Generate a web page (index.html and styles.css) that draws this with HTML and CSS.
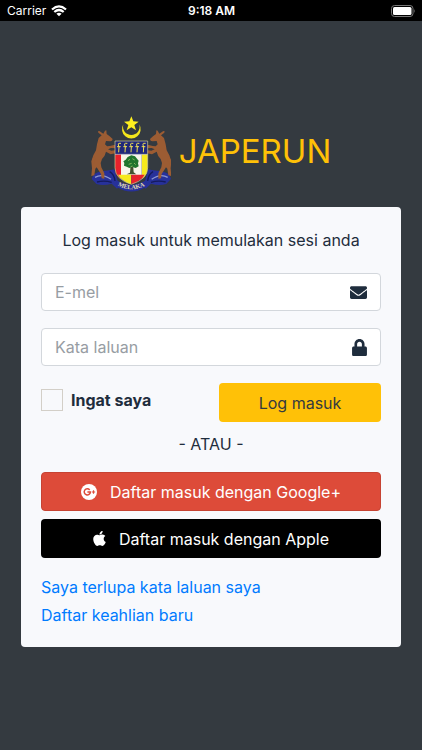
FILE: index.html
```html
<!doctype html>
<html lang="ms">
  <head>
    <meta charset="utf-8">
    <meta name="viewport" content="width=device-width, initial-scale=1.0">
    <title>JAPERUN | Log masuk</title>
    <link rel="stylesheet" href="styles.css">
  </head>
  <body>
    <header class="status-bar">
      <div class="carrier">
        <span>Carrier</span>
        <svg width="16" height="12" viewBox="0 0 16 12" fill="none" stroke="#fff" stroke-width="2.200">
          <path d="M1 4.500Q8-1.700 15 4.500M3.300 7Q8 3 12.700 7"/>
          <path d="M5.400 8.700Q8 6.800 10.600 8.700L8 11.300z" fill="#fff" stroke="none"/>
        </svg>
      </div>
      <div class="clock">9:18 AM</div>
      <div class="battery">
        <svg width="25" height="12" viewBox="0 0 25 12">
          <rect x=".5" y=".5" width="21.500" height="11" rx="3" fill="none" stroke="#777"/>
          <rect x="2" y="2" width="18.500" height="8" rx="1.500" fill="#fff"/>
          <path d="M23.300 4q1.500 2 0 4z" fill="#777"/>
        </svg>
      </div>
    </header>

    <main class="login-page">
      <div class="login-logo">
        <svg class="crest" width="80" height="76" viewBox="24 17 240 228">
          <!-- crescent and star -->
          <path d="M121 42A28 28 0 1 0 169 42A25 25 0 1 1 121 42z" fill="#f3e51c"/>
          <path d="M145 18l6 15 16 1-13 10 5 16-14-9-14 9 5-16-13-10 16-1z" fill="#fff01e"/>
          <!-- ribbon -->
          <g fill="#27319a">
            <path d="M26 206q4-19 30-23 26-3 38-6l10 36 10 10-12 12-16-15q-24 8-46 1l-6-7z"/>
            <path d="M264 206q-4-19-30-23-26-3-38-6l-10 36-10 10 12 12 16-15q24 8 46 1l6-7z"/>
            <path d="M98 208q47 30 94 0l-4 22q-43 27-86 0z"/>
          </g>
          <path d="M36 201q22-13 48 6M254 201q-22-13-48 6" fill="none" stroke="#8d98d2" stroke-width="4"/>
          <path d="M42 215q22-6 44 1M248 215q-22-6-44 1M80 184q14 8 16 28M210 184q-14 8-16 28" fill="none" stroke="#151b5c" stroke-width="4"/>
          <!-- deer -->
          <g id="deer" fill="#9c5c33">
            <path d="M56 75l-10-8-1-4 4-1 12 8 5-9 4-1 1 11 9 7 9 8-2 5-5 2-13-1-3 10 6 6 9-1 12-3 11 1 3 5-4 4-19-1-9 4 10 4 10-1 4 3-2 6-14 3-14-8q-3 14-12 22l-4 12 2 13 9 18 0 16-8-1-2-13-13-20-4 4-3 20-9 2 2-23-2-21 6-18 8-15 3-18 5-19z"/>
            <path d="M33 138l-6 10 1 15 6-5 3-15z"/>
          </g>
          <use href="#deer" transform="translate(290 0) scale(-1 1)"/>
          <!-- shield -->
          <path d="M96 92h98v80q0 35-49 50-49-15-49-50z" fill="#20287a"/>
          <path d="M96 132h18v74q-18-12-18-34z" fill="#e8222c"/>
          <path d="M176 132h18v40q0 22-18 34z" fill="#f6e91c"/>
          <path d="M114 132h62v62h-62z" fill="#f7f5e9"/>
          <path d="M105 193h40v29q-30-10-40-29z" fill="#f6e91c"/>
          <path d="M145 193h40q-10 19-40 29z" fill="#e8222c"/>
          <path d="M96 132h98" stroke="#c8cbd8" stroke-width="2"/>
          <path d="M96 92h98v80q0 35-49 50-49-15-49-50z" fill="none" stroke="#d5cf91" stroke-width="2"/>
          <!-- five daggers -->
          <g fill="none" stroke="#efdf54" stroke-width="3">
            <path id="keris" d="M114 99h-6q-3 0-2 5l2 6-1 16M102 109h11"/>
            <use href="#keris" x="19"/>
            <use href="#keris" x="37"/>
            <use href="#keris" x="55"/>
            <use href="#keris" x="74"/>
          </g>
          <!-- tree -->
          <path d="M143 162h7l2 24 8 6h-29l10-5z" fill="#42522d"/>
          <path d="M128 148l6-8 11-5 11 3 6 7 5 6-2 8 2 9-9 5-10-3-9 3-8-4-8-3 1-8-3-5z" fill="#20752d"/>
          <path d="M135 151l6-4M148 145l7 4M137 162l9-3M153 158l5 5M143 169l6-2" stroke="#83b55c" stroke-width="3"/>
          <!-- motto -->
          <path id="motto" d="M97 222Q145 252 193 222" fill="none"/>
          <text class="motto"><textPath href="#motto" startOffset="50%">MELAKA</textPath></text>
        </svg>
        <h1>JAPERUN</h1>
      </div>

      <section class="card">
        <p class="login-msg">Log masuk untuk memulakan sesi anda</p>
        <form>
          <div class="input-group">
            <input type="email" placeholder="E-mel" aria-label="E-mel">
            <svg class="field-icon" width="17" height="17" viewBox="0 0 512 512" fill="currentColor">
              <path d="M502 191c4-3 10 0 10 5v204c0 27-21 48-48 48H48c-27 0-48-21-48-48V196c0-5 6-8 10-5 22 17 52 40 154 114 21 15 57 48 92 47 36 0 72-32 92-47 102-74 132-97 154-114zM256 320c23 0 57-29 74-42 133-96 143-105 173-128 6-5 9-12 9-19v-19c0-27-21-48-48-48H48c-27 0-48 21-48 48v19c0 7 3 14 9 19 30 23 40 32 173 128 17 13 51 42 74 42z"/>
            </svg>
          </div>
          <div class="input-group">
            <input type="password" placeholder="Kata laluan" aria-label="Kata laluan">
            <svg class="field-icon" width="15" height="17" viewBox="0 0 448 512" fill="currentColor">
              <path d="M400 224h-24v-72C376 68 308 0 224 0S72 68 72 152v72H48c-27 0-48 21-48 48v192c0 27 21 48 48 48h352c27 0 48-21 48-48V272c0-27-21-48-48-48zm-104 0H152v-72c0-40 32-72 72-72s72 32 72 72v72z"/>
            </svg>
          </div>
          <div class="login-row">
            <div class="remember">
              <input type="checkbox" id="remember">
              <label for="remember">Ingat saya</label>
            </div>
            <button type="submit" class="btn btn-warning">Log masuk</button>
          </div>
        </form>

        <div class="social-auth">
          <p>- ATAU -</p>
          <button type="button" class="btn btn-google">
            <svg width="16" height="16" viewBox="0 0 16 16">
              <circle cx="8" cy="8" r="8" fill="#fff"/>
              <path d="M8.700 5.900A3.100 3.100 0 1 0 9.400 8H6.400" fill="none" stroke="#dd4b39" stroke-width="1.500"/>
              <path d="M12.500 6.300v3.400M10.800 8h3.400" stroke="#dd4b39" stroke-width="1.200"/>
            </svg>
            <span>Daftar masuk dengan Google+</span>
          </button>
          <button type="button" class="btn btn-apple">
            <svg width="13" height="15" viewBox="0 0 376 450" fill="currentColor">
              <path d="M314 238c0-37 17-65 50-85-19-27-47-42-85-45-35-3-74 21-88 21-15 0-50-20-77-20C58 110 0 154 0 243c0 26 5 53 14 81 13 37 59 127 107 125 25-1 43-18 76-18 32 0 48 18 76 18 49-1 90-82 102-119-65-31-61-90-61-92zM257 74c27-33 25-62 24-74-24 1-52 16-68 35-18 20-28 44-26 73 26 2 50-12 70-34z"/>
            </svg>
            <span>Daftar masuk dengan Apple</span>
          </button>
        </div>

        <nav class="links">
          <a href="#">Saya terlupa kata laluan saya</a>
          <a href="#">Daftar keahlian baru</a>
        </nav>
      </section>
    </main>
  </body>
</html>
```
FILE: styles.css
```css
* {
    box-sizing: border-box;
}
body {
    display: flex;
    flex-direction: column;
    min-height: 100vh;
    margin: 0;
    font-family: Inter, sans-serif;
    font-size: 16px;
    color: #1f2d3d;
    background-color: #343a40;
}
svg {
    display: block;
    flex: none;
}
h1,
p {
    margin: 0;
    font-weight: 400;
}

/* Status bar */
.status-bar {
    display: grid;
    grid-template-columns: 1fr auto 1fr;
    align-items: center;
    height: 21px;
    padding: 0 6px 0 7px;
    font-size: 12px;
    color: #ffffff;
    background-color: #000000;
}
.carrier {
    display: flex;
    align-items: center;
    gap: 5px;
}
.clock {
    font-weight: 600;
}
.battery {
    justify-self: end;
}

/* Logo */
.login-page {
    padding: 95px 21px 20px;
}
.login-logo {
    display: flex;
    align-items: center;
    justify-content: center;
    gap: 8px;
    height: 76px;
    margin-bottom: 15px;
}
.login-logo h1 {
    padding-bottom: 6px;
    font-size: 33px;
    line-height: 40px;
    color: #ffc107;
}
.motto {
    font-family: "Liberation Serif", serif;
    font-size: 19px;
    font-weight: 700;
    text-anchor: middle;
    fill: #e6dfae;
}

/* Card */
.card {
    padding: 20px 20px 18px;
    border-radius: 4px;
    background-color: #f8f9fc;
}
.login-msg {
    margin-bottom: 20px;
    line-height: 26px;
    text-align: center;
}
.input-group {
    display: flex;
    align-items: center;
    height: 38px;
    margin-bottom: 17px;
    padding: 0 13px;
    border: 1px solid #d3d7dc;
    border-radius: 4px;
    background-color: #ffffff;
}
.input-group input {
    flex: 1;
    min-width: 0;
    padding: 0;
    border: 0;
    outline: 0;
    font: inherit;
    color: inherit;
    background: none;
}
.input-group input::placeholder {
    color: #979da3;
    opacity: 1;
}
.login-row {
    display: grid;
    grid-template-columns: 1fr 162px;
    align-items: center;
}
.remember {
    display: flex;
    align-items: center;
    gap: 8px;
    padding-bottom: 5px;
    font-weight: 700;
}
.remember input {
    appearance: none;
    width: 22px;
    height: 22px;
    margin: 0;
    border: 1px solid #d3cfc8;
}
.remember input:checked {
    background-color: #007bff;
}

/* Buttons */
.btn {
    display: flex;
    align-items: center;
    justify-content: center;
    gap: 13px;
    width: 100%;
    height: 39px;
    padding: 0 12px;
    border: 0;
    border-radius: 4px;
    font: inherit;
    cursor: pointer;
}
.btn-warning {
    color: #343a40;
    background-color: #ffc107;
}
.btn-google {
    border: 1px solid #c64333;
    color: #ffffff;
    background-color: #dd4b39;
}
.btn-apple {
    color: #ffffff;
    background-color: #000000;
}
.social-auth {
    display: flex;
    flex-direction: column;
    gap: 8px;
    margin: 9px 0 15px;
}
.social-auth p {
    margin-bottom: 7px;
    line-height: 26px;
    text-align: center;
}

/* Links */
.links {
    display: flex;
    flex-direction: column;
    align-items: flex-start;
    line-height: 28px;
}
.links a {
    color: #007bff;
    text-decoration: none;
}
```
